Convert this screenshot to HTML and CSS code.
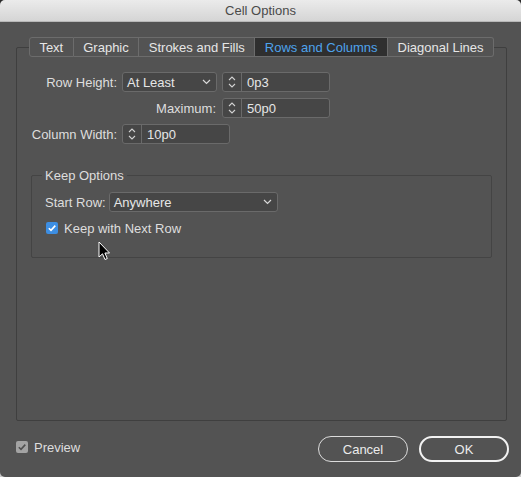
FILE: index.html
```html
<!DOCTYPE html>
<html>
<head>
<meta charset="utf-8">
<link rel="stylesheet" href="styles.css">
</head>
<body>
<div class="window">
  <div class="titlebar">Cell Options</div>
  <div class="content">
    <div class="tabs">
      <div class="tab">Text</div>
      <div class="tab">Graphic</div>
      <div class="tab">Strokes and Fills</div>
      <div class="tab active">Rows and Columns</div>
      <div class="tab">Diagonal Lines</div>
    </div>
    <div class="panel">
      <div class="row">
        <div class="label lbl-main">Row Height:</div>
        <div class="select sel-rh"><span>At Least</span>
          <svg class="chev" width="9" height="6" viewBox="0 0 9 6"><path d="M1 1 L4.5 4.5 L8 1" fill="none" stroke="#d8d8d8" stroke-width="1.2"/></svg>
        </div>
        <div class="spin sp-rh">
          <div class="arrows"><svg width="18" height="18" viewBox="0 0 18 18"><path d="M6 7 L9 4 L12 7" fill="none" stroke="#d0d0d0" stroke-width="1.1"/><path d="M6 11 L9 14 L12 11" fill="none" stroke="#d0d0d0" stroke-width="1.1"/></svg></div>
          <div class="val">0p3</div>
        </div>
      </div>
      <div class="row">
        <div class="label lbl-max">Maximum:</div>
        <div class="spin sp-rh">
          <div class="arrows"><svg width="18" height="18" viewBox="0 0 18 18"><path d="M6 7 L9 4 L12 7" fill="none" stroke="#d0d0d0" stroke-width="1.1"/><path d="M6 11 L9 14 L12 11" fill="none" stroke="#d0d0d0" stroke-width="1.1"/></svg></div>
          <div class="val">50p0</div>
        </div>
      </div>
      <div class="row">
        <div class="label lbl-main">Column Width:</div>
        <div class="spin sp-cw">
          <div class="arrows"><svg width="18" height="18" viewBox="0 0 18 18"><path d="M6 7 L9 4 L12 7" fill="none" stroke="#d0d0d0" stroke-width="1.1"/><path d="M6 11 L9 14 L12 11" fill="none" stroke="#d0d0d0" stroke-width="1.1"/></svg></div>
          <div class="val">10p0</div>
        </div>
      </div>
      <div class="group">
        <div class="legend"><span>Keep Options</span></div>
        <div class="grow">
          <div class="label-plain">Start Row:</div>
          <div class="select sel-sr"><span>Anywhere</span>
            <svg class="chev" width="9" height="6" viewBox="0 0 9 6"><path d="M1 1 L4.5 4.5 L8 1" fill="none" stroke="#d8d8d8" stroke-width="1.2"/></svg>
          </div>
        </div>
        <div class="crow">
          <div class="check blue"><svg width="12" height="12" viewBox="0 0 12 12"><path d="M2.8 6.2 L5 8.4 L9.3 3.6" fill="none" stroke="#fff" stroke-width="1.6"/></svg></div>
          <div class="clabel">Keep with Next Row</div>
        </div>
      </div>
    </div>
    <div class="footer">
      <div class="preview">
        <div class="check gray"><svg width="12" height="12" viewBox="0 0 12 12"><path d="M2.8 6.2 L5 8.4 L9.3 3.6" fill="none" stroke="#505050" stroke-width="1.6"/></svg></div>
        <div class="clabel">Preview</div>
      </div>
      <div class="buttons">
        <div class="btn">Cancel</div>
        <div class="btn default">OK</div>
      </div>
    </div>
  </div>
  <svg class="cursor" width="14" height="22" viewBox="0 0 14 22"><path d="M1 1 L1 16 L4.5 12.8 L7 18.5 L9.3 17.5 L6.9 12 L11.5 12 Z" fill="#000" stroke="#fff" stroke-width="1"/></svg>
</div>
</body>
</html>
```
FILE: styles.css
```css
html, body {
  margin: 0;
  padding: 0;
}
body {
  width: 521px;
  height: 477px;
  background: linear-gradient(#2a2a2a, #c8c8c8);
  font-family: "Liberation Sans", Arial, sans-serif;
  font-size: 13px;
  color: #dedede;
}
.window {
  position: relative;
  width: 521px;
  height: 477px;
  background: #535353;
  border-radius: 5px;
  overflow: hidden;
  display: flex;
  flex-direction: column;
}
.titlebar {
  height: 22px;
  line-height: 22px;
  text-align: center;
  background: linear-gradient(#ebebeb, #d5d5d5);
  border-bottom: 1px solid #b8b8b8;
  box-sizing: border-box;
  color: #4a4a4a;
  font-size: 13px;
}
.content {
  padding: 15px 14px 0 16px;
  display: flex;
  flex-direction: column;
}
.tabs {
  position: relative;
  z-index: 1;
  display: flex;
  justify-content: center;
  height: 20px;
  margin-bottom: -10px;
}
.tab {
  box-sizing: border-box;
  height: 20px;
  line-height: 19px;
  padding: 0 9.5px;
  background: #535353;
  border: 1px solid #6c6c6c;
  border-left: none;
  color: #e6e6e6;
}
.tab:first-child {
  border-left: 1px solid #6c6c6c;
  border-radius: 3px 0 0 3px;
}
.tab:last-child {
  border-radius: 0 3px 3px 0;
}
.tab.active {
  background: #2f2f2f;
  color: #4ea3ec;
}
.panel {
  box-sizing: border-box;
  width: 491px;
  height: 374px;
  border: 1px solid #3f3f3f;
  border-radius: 2px;
  padding-top: 24px;
  display: flex;
  flex-direction: column;
  gap: 6px;
}
.row {
  display: flex;
  align-items: center;
  height: 20px;
}
.label {
  text-align: right;
  white-space: nowrap;
}
.lbl-main {
  width: 100px;
  margin-right: 5px;
}
.lbl-max {
  width: 199px;
  margin-right: 6px;
}
.select {
  box-sizing: border-box;
  height: 20px;
  background: #464646;
  border: 1px solid #6a6a6a;
  border-radius: 3px;
  display: flex;
  align-items: center;
  justify-content: space-between;
  padding: 0 5px 0 4px;
  color: #e6e6e6;
}
.sel-rh {
  width: 95px;
  margin-right: 5px;
}
.sel-sr {
  width: 169px;
}
.spin {
  box-sizing: border-box;
  height: 20px;
  background: #464646;
  border: 1px solid #6a6a6a;
  border-radius: 3px;
  display: flex;
  align-items: center;
}
.sp-rh {
  width: 108px;
}
.sp-cw {
  width: 108px;
}
.arrows {
  width: 18px;
  height: 18px;
  border-right: 1px solid #6a6a6a;
  display: flex;
}
.val {
  padding-left: 5px;
  color: #e6e6e6;
}
.group {
  box-sizing: border-box;
  margin: 25px 14px 0 14px;
  height: 83px;
  border: 1px solid #444444;
  border-radius: 2px;
  padding: 0 13px;
  display: flex;
  flex-direction: column;
}
.legend {
  margin-top: -8px;
  height: 16px;
  line-height: 16px;
  display: flex;
}
.legend span {
  background: #535353;
  padding: 0 3px;
  margin-left: -3px;
}
.grow {
  margin-top: 8px;
  height: 20px;
  display: flex;
  align-items: center;
  gap: 3px;
}
.crow {
  margin-top: 8px;
  height: 16px;
  display: flex;
  align-items: center;
  padding-left: 1px;
}
.check {
  width: 12px;
  height: 12px;
  border-radius: 2px;
  display: flex;
}
.check.blue {
  background: #3d8ee2;
}
.check.gray {
  background: #a3a3a3;
}
.clabel {
  margin-left: 6px;
}
.footer {
  display: flex;
  justify-content: space-between;
  align-items: center;
  margin-top: 15px;
}
.preview {
  display: flex;
  align-items: center;
  margin-bottom: 4px;
}
.buttons {
  display: flex;
  gap: 11px;
  margin-right: -2px;
}
.btn {
  box-sizing: border-box;
  width: 90px;
  height: 26px;
  border: 1.5px solid #dcdcdc;
  border-radius: 13px;
  display: flex;
  align-items: center;
  justify-content: center;
  color: #ececec;
}
.btn.default {
  border: 2px solid #f2f2f2;
}
.cursor {
  position: absolute;
  left: 98px;
  top: 241px;
}
```
